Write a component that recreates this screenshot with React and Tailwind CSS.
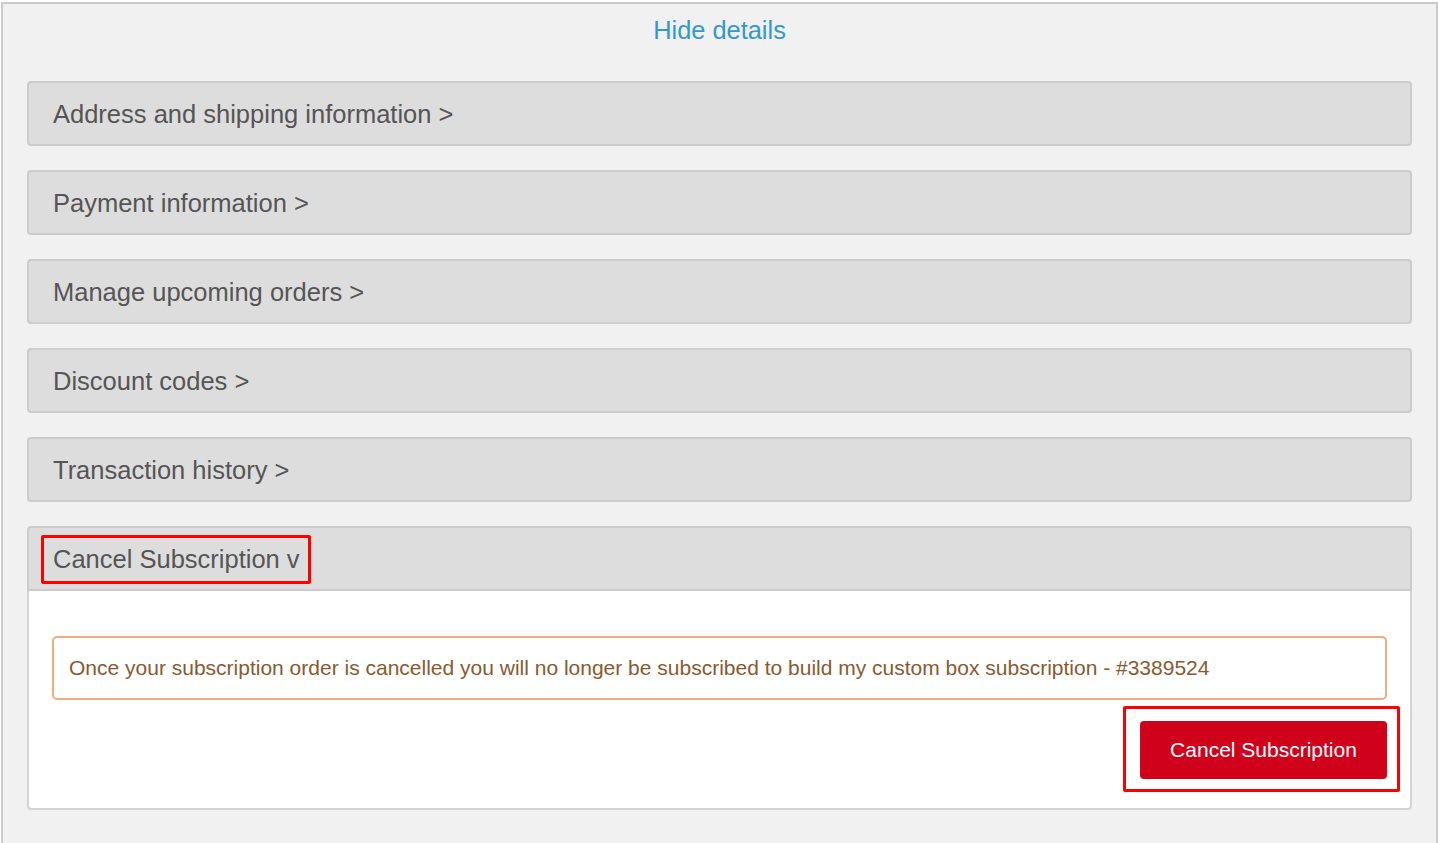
import { useState } from 'react';

const SECTIONS = [
  'Address and shipping information >',
  'Payment information >',
  'Manage upcoming orders >',
  'Discount codes >',
  'Transaction history >',
];

export default function App() {
  const [open, setOpen] = useState(true);

  return (
    <div className="min-h-screen bg-white pt-[2px] pl-[1px] pr-[2px]" style={{ fontFamily: '"Liberation Sans", Arial, sans-serif' }}>
      <div className="min-h-[900px] border-2 border-b-0 border-[#cccccc] bg-[#f1f1f1] px-[24px]">
        <div className="h-[57px] flex items-center justify-center pb-[4px]">
          <a className="text-[25.4px] text-[#3399cc] cursor-pointer">Hide details</a>
        </div>

        <div className="mt-[20px] flex flex-col gap-[24px]">
          {SECTIONS.map(label => (
            <div key={label} className="h-[65px] flex items-center px-[24px] pt-[2px] bg-[#dddddd] border-2 border-[#cccccc] rounded-[4px]">
              <span className="text-[25.5px] text-[#555555]">{label}</span>
            </div>
          ))}

          <div>
            <div
              onClick={() => setOpen(!open)}
              className="h-[65px] flex items-center pl-[12px] pt-[1px] bg-[#dddddd] border-2 border-[#cccccc] rounded-t-[4px] cursor-pointer"
            >
              <div className="h-[49px] flex items-center pl-[9px] pr-[8px] border-[3px] border-[#ff0000] rounded-[2px]">
                <span className="text-[25.5px] text-[#555555]">Cancel Subscription v</span>
              </div>
            </div>
            {open && (
              <div className="bg-white border-2 border-t-0 border-[#d4d4d4] rounded-b-[4px] px-[23px] pt-[45px] pb-[16px]">
                <div className="h-[64px] flex items-center px-[15px] border-2 border-[#f0ae80] rounded-[5px]">
                  <span className="text-[21px] text-[#8a5a2e]">
                    Once your subscription order is cancelled you will no longer be subscribed to build my custom box subscription - #3389524
                  </span>
                </div>
                <div className="mt-[6px] flex justify-end -mr-[13px]">
                  <div className="pl-[14px] pr-[10px] pt-[12px] pb-[10px] border-[3px] border-[#ff0000] rounded-[2px]">
                    <button className="w-[247px] h-[58px] bg-[#d0021b] rounded-[4px] text-white text-[21px]">
                      Cancel Subscription
                    </button>
                  </div>
                </div>
              </div>
            )}
          </div>
        </div>
      </div>
    </div>
  );
}
